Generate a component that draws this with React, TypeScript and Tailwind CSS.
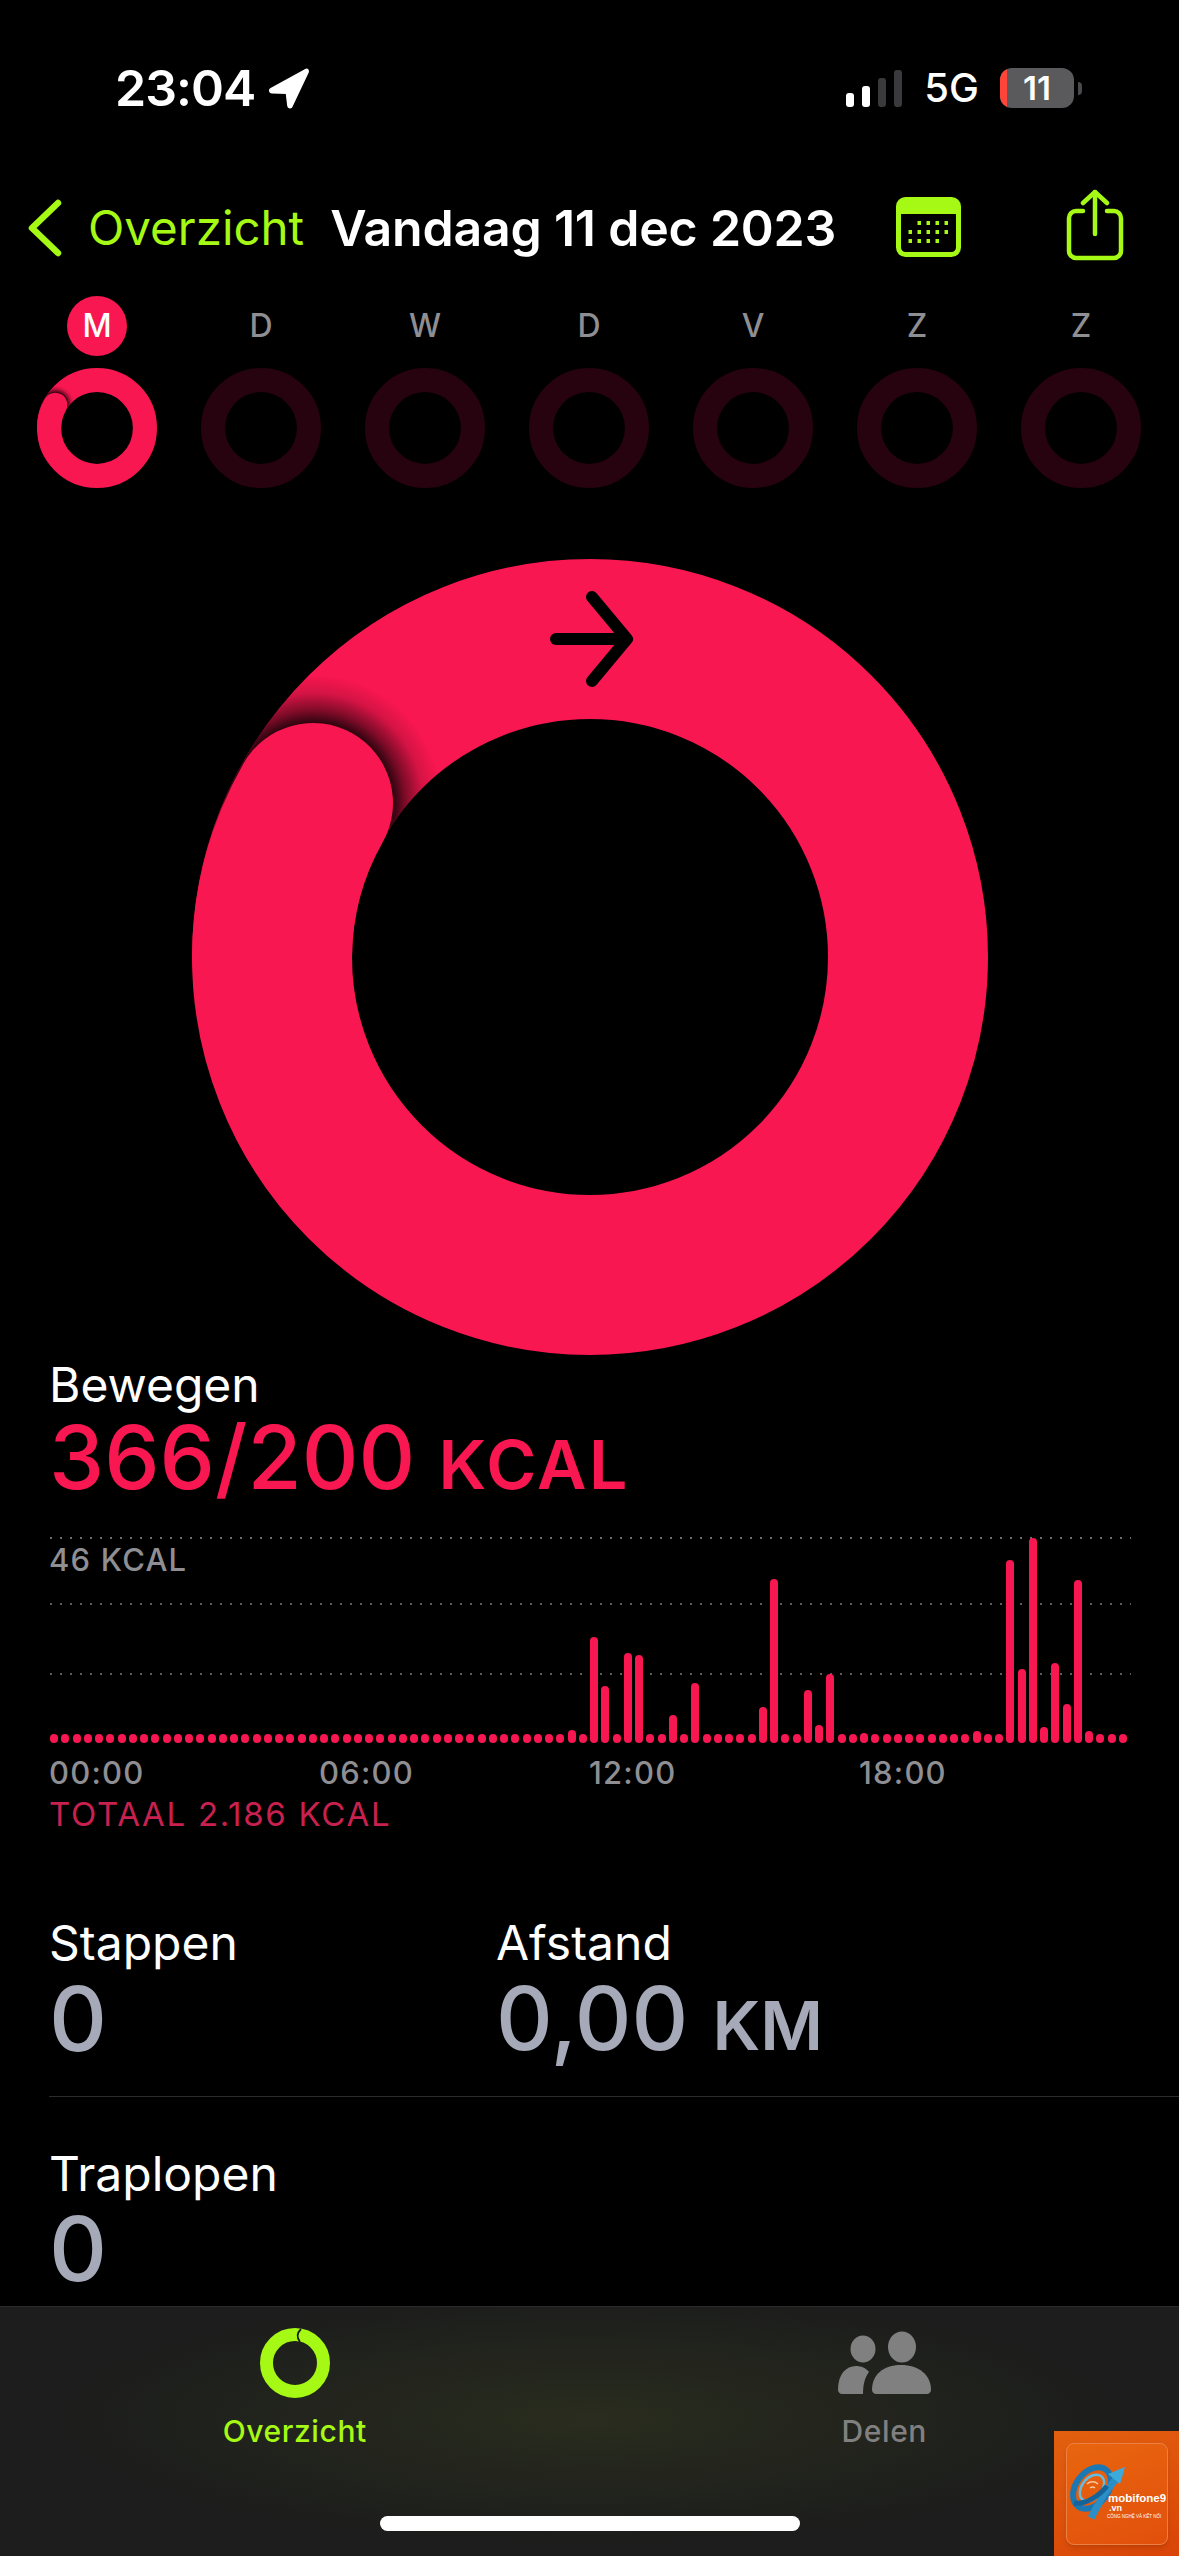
import React from "react";

const PINK = "#f81750";

// kwartierwaarden, 9 = alleen een stip
const spikes: Record<number, number> = {
  46: 13, 48: 106, 49: 57, 51: 90, 52: 88, 55: 28, 57: 60, 63: 36, 64: 164, 67: 53, 68: 18, 69: 69,
  72: 10, 82: 12, 85: 183, 86: 74, 87: 205, 88: 16, 89: 80, 90: 39, 91: 163, 92: 12,
};
const bars = Array.from({ length: 96 }, (_, i) => spikes[i] ?? 9);

const days = ["D", "W", "D", "V", "Z", "Z"];
const times = ["00:00", "06:00", "12:00", "18:00"];

function Ring({ size, done, id }: { size: number; done?: boolean; id: string }) {
  if (!done) {
    return (
      <svg width={size} height={size} viewBox="0 0 796 796">
        <circle cx="398" cy="398" r="318" fill="none" stroke="#26030e" strokeWidth="160" />
      </svg>
    );
  }
  return (
    <svg width={size} height={size} viewBox="0 0 796 796">
      <defs>
        <radialGradient id={id + "-shadow"} gradientUnits="userSpaceOnUse" cx="121" cy="244" r="128">
          <stop offset="0.6" stopColor="#000" stopOpacity="0.9" />
          <stop offset="0.72" stopColor="#000" stopOpacity="0.5" />
          <stop offset="0.86" stopColor="#000" stopOpacity="0.14" />
          <stop offset="1" stopColor="#000" stopOpacity="0" />
        </radialGradient>
        <mask id={id + "-mask"}>
          <circle cx="398" cy="398" r="318" fill="none" stroke="#fff" strokeWidth="160" />
        </mask>
      </defs>
      <circle cx="398" cy="398" r="318" fill="none" stroke={PINK} strokeWidth="160" />
      <circle cx="121" cy="244" r="128" fill={`url(#${id}-shadow)`} mask={`url(#${id}-mask)`} />
      <path d="M121 244 A318 318 0 0 0 80 398" fill="none" stroke={PINK} strokeWidth="160" strokeLinecap="round" />
    </svg>
  );
}

function CalendarIcon() {
  return (
    <svg width="65" height="60" viewBox="0 0 65 60">
      <rect x="2.5" y="2.5" width="60" height="55" rx="7" fill="none" stroke="#a5f914" strokeWidth="5" />
      <path d="M2 9a7 7 0 0 1 7-7h47a7 7 0 0 1 7 7v8H2z" fill="#a5f914" />
      <g fill="#a5f914">
        {[26, 35, 44].map((y) =>
          [14, 23, 32, 41, 50].map((x) =>
            (y === 26 && x === 14) || (y === 44 && x === 50) ? null : <rect key={x + "-" + y} x={x - 1.5} y={y - 2} width="3.5" height="4" />
          )
        )}
      </g>
    </svg>
  );
}

function ShareIcon() {
  return (
    <svg width="58" height="72" viewBox="0 0 58 72" fill="none" stroke="#a5f914" strokeWidth="4.5" strokeLinecap="round" strokeLinejoin="round">
      <path d="M17 22H10a7 7 0 0 0-7 7v33a7 7 0 0 0 7 7h38a7 7 0 0 0 7-7V29a7 7 0 0 0-7-7H41" />
      <path d="M29 45V3" />
      <path d="M17 14 29 3l12 11" />
    </svg>
  );
}

function MobifoneBadge() {
  return (
    <div className="absolute right-0 bottom-0 w-[125px] h-[125px] bg-[linear-gradient(160deg,#e2600f,#d94508)] text-white">
      <div className="absolute left-[12px] top-[12px] w-[102px] h-[102px] rounded-lg bg-[linear-gradient(160deg,#e8650f,#e2500c)] border border-[#ec8044] shadow-md" />
      <svg className="absolute left-0 top-0" width="125" height="125" viewBox="0 0 125 125" fill="none">
        <ellipse cx="38" cy="57" rx="23" ry="16" transform="rotate(-52 38 57)" stroke="#1b78b3" strokeWidth="6" />
        <ellipse cx="38" cy="57" rx="15" ry="10" transform="rotate(-52 38 57)" stroke="#62bde0" strokeWidth="2.500" />
        <path d="M33 53a8 8 0 0 1 11 0M36 57a4 4 0 0 1 5 0" stroke="#f4c9a0" strokeWidth="1.500" />
        <path d="M37 87 50 63 66 43" stroke="#2a8fc7" strokeWidth="7" />
        <path d="M20 72C32 74 46 64 53 55" stroke="#14639a" strokeWidth="5" />
        <path d="M71 36 54 43 66 53z" fill="#3cabdc" />
      </svg>
      <div className="absolute left-[54px] top-[62px] font-['Liberation_Sans',sans-serif] font-bold text-[11.500px] leading-none">mobifone9</div>
      <div className="absolute left-[55px] top-[73px] font-['Liberation_Sans',sans-serif] font-bold text-[9px] leading-none">.vn</div>
      <div className="absolute left-[53px] top-[84px] font-['Liberation_Sans',sans-serif] text-[4.500px] leading-none whitespace-nowrap">CÔNG NGHỆ VÀ KẾT NỐI</div>
    </div>
  );
}

export default function App() {
  return (
    <div className="relative w-[1179px] h-[2556px] overflow-hidden bg-black flex flex-col font-[Inter,sans-serif] text-white">
      <div className="flex-1 min-h-0">
        {/* statusbalk */}
        <div className="h-[176px] flex items-center pl-[115px] pr-[97px]">
          <span className="text-[50px] leading-none font-semibold tracking-[-1px]">23:04</span>
          <svg className="ml-[12px]" width="42" height="42" viewBox="0 0 40 40">
            <path d="M37 3 4 21c-1.500.8-1 3 .7 3l14.300.5 1.500 12.500c.2 1.700 2.300 1.800 2.800.2L38.500 5c.5-1.500-.1-2.700-1.500-2z" fill="#fff" stroke="#fff" strokeWidth="2.500" strokeLinejoin="round" />
          </svg>
          <div className="ml-auto flex items-end gap-[8px] h-[37px]">
            <div className="w-[8px] h-[14px] rounded-[3px] bg-white" />
            <div className="w-[8px] h-[21px] rounded-[3px] bg-white" />
            <div className="w-[8px] h-[29px] rounded-[3px] bg-[#3a3a3c]" />
            <div className="w-[8px] h-[37px] rounded-[3px] bg-[#3a3a3c]" />
          </div>
          <span className="ml-[22px] text-[40px] leading-none font-medium">5G</span>
          <div className="ml-[21px] w-[74px] h-[40px] rounded-[12px] bg-[#5a5a5c] overflow-hidden flex items-center">
            <div className="w-[7px] h-full bg-[#ff453a]" />
            <span className="flex-1 text-center pr-[7px] text-[33px] leading-none font-semibold">11</span>
          </div>
          <div className="ml-[4px] w-[4px] h-[13px] rounded-r-full bg-[#4a4a4c]" />
        </div>

        {/* navigatie */}
        <div className="h-[104px] flex items-center">
          <svg className="ml-[28px]" width="34" height="58" viewBox="0 0 34 58" fill="none" stroke="#a5f914" strokeWidth="6.500" strokeLinecap="round" strokeLinejoin="round">
            <path d="M30 4 4 29l26 25" />
          </svg>
          <span className="ml-[26px] text-[#a5f914] text-[47.500px] leading-none">Overzicht</span>
          <span className="ml-[26px] text-[50px] leading-none font-semibold tracking-[-0.2px] whitespace-nowrap">Vandaag 11 dec 2023</span>
          <div className="ml-[60px] mt-[-2px]"><CalendarIcon /></div>
          <div className="ml-[105px] mt-[-6px]"><ShareIcon /></div>
        </div>

        {/* weekrij */}
        <div className="mt-[16px] pl-[15px] flex">
          <div className="w-[164px] flex flex-col items-center">
            <div className="w-[60px] h-[60px] rounded-full bg-[#f81750] flex items-center justify-center text-[32px] leading-none font-medium">M</div>
            <div className="mt-[12px]"><Ring size={120} done id="small" /></div>
          </div>
          {days.map((d, i) => (
            <div key={i} className="w-[164px] flex flex-col items-center">
              <div className="h-[60px] flex items-center text-[32px] leading-none font-medium text-[#8e8e93]">{d}</div>
              <div className="mt-[12px]"><Ring size={120} /></div>
            </div>
          ))}
        </div>

        {/* grote ring */}
        <div className="mt-[71px] flex justify-center">
          <div className="relative w-[796px] h-[796px]">
            <Ring size={796} done id="big" />
            <svg className="absolute left-[356px] top-[30px]" width="88" height="100" viewBox="0 0 88 100" fill="none" stroke="#000" strokeWidth="12" strokeLinecap="round" strokeLinejoin="round">
              <path d="M8 50h70" />
              <path d="M44 8l35 42-35 42" />
            </svg>
          </div>
        </div>

        {/* bewegen */}
        <div className="mt-[6px] pl-[49px]">
          <div className="text-[48px] leading-none">Bewegen</div>
          <div className="mt-[4px] flex items-baseline text-[#f81750] leading-none">
            <span className="text-[88px] font-medium">366/200</span>
            <span className="ml-[23px] text-[68px] font-semibold tracking-[2.500px]">KCAL</span>
          </div>
        </div>

        {/* grafiek */}
        <div className="relative mt-[28px] ml-[50px] w-[1078px] h-[214px] flex items-end justify-between">
          <div className="absolute left-0 right-[-3px] top-[8px] h-[2px] bg-[repeating-linear-gradient(90deg,#6e6e6e_0_2px,transparent_2px_10px)]" />
          <div className="absolute left-0 right-[-3px] top-[74px] h-[2px] bg-[repeating-linear-gradient(90deg,#5c5c5c_0_2px,transparent_2px_10px)]" />
          <div className="absolute left-0 right-[-3px] top-[144px] h-[2px] bg-[repeating-linear-gradient(90deg,#5c5c5c_0_2px,transparent_2px_10px)]" />
          <div className="absolute left-[-1px] top-[15px] text-[31px] leading-none font-medium tracking-[1.200px] text-[#8e8e93]">46 KCAL</div>
          {bars.map((h, i) => (
            <div key={i} className="relative w-[8px] rounded-full bg-[#f81750]" style={{ height: h }} />
          ))}
        </div>
        <div className="mt-[14px] pl-[49px] flex text-[31px] leading-none font-medium tracking-[1.200px] text-[#8e8e93]">
          {times.map((t) => (
            <div key={t} className="w-[270px]">{t}</div>
          ))}
        </div>
        <div className="mt-[10px] pl-[49px] text-[33px] leading-none tracking-[1.700px] text-[#c9214f]">TOTAAL 2.186 KCAL</div>

        {/* stappen en afstand */}
        <div className="mt-[88px] pl-[49px] flex">
          <div className="w-[447px]">
            <div className="text-[48px] leading-none">Stappen</div>
            <div className="mt-[7px] text-[90px] leading-none font-medium text-[#a5a9b8]">0</div>
          </div>
          <div>
            <div className="text-[48px] leading-none">Afstand</div>
            <div className="mt-[7px] flex items-baseline leading-none text-[#a5a9b8]">
              <span className="text-[88px] font-medium">0,00</span>
              <span className="ml-[24px] text-[68px] font-semibold">KM</span>
            </div>
          </div>
        </div>
        <div className="mt-[32px] ml-[49px] h-px bg-[#2c2c2e]" />
        <div className="mt-[53px] pl-[49px]">
          <div className="text-[48px] leading-none">Traplopen</div>
          <div className="mt-[6px] text-[90px] leading-none font-medium text-[#a5a9b8]">0</div>
        </div>
      </div>

      {/* tabbalk */}
      <div className="relative h-[250px] shrink-0 border-t border-[#2b2b2b] bg-[radial-gradient(ellipse_at_50%_45%,#292c1e_0%,#1c1d1c_65%)] pt-[21px]">
        <div className="grid grid-cols-2">
          <div className="flex flex-col items-center">
            <svg width="70" height="70" viewBox="0 0 70 70">
              <circle cx="35" cy="35" r="28.500" fill="none" stroke="#a5f914" strokeWidth="13" />
              <path d="M41 1c-4 4-4 9-1 13" fill="none" stroke="#1c1d1c" strokeWidth="1.800" />
            </svg>
            <div className="mt-[18px] text-[30px] leading-none font-medium tracking-[0.6px] text-[#a5f914]">Overzicht</div>
          </div>
          <div className="flex flex-col items-center">
            <svg width="93" height="70" viewBox="0 0 93 70" fill="#808080">
              <ellipse cx="25" cy="21" rx="12.500" ry="13.500" />
              <ellipse cx="64" cy="19" rx="14" ry="15.500" />
              <path d="M0 62C0 46 8 38 18 38c5 0 10 2 13 6-4 5-6 12-6 22H4c-2 0-4-2-4-4z" />
              <path d="M34 62c0-15 11-25 29-25s30 10 30 25c0 2-2 4-4 4H38c-2 0-4-2-4-4z" />
            </svg>
            <div className="mt-[18px] text-[30px] leading-none font-medium tracking-[0.6px] text-[#808080]">Delen</div>
          </div>
        </div>
        <div className="mt-[70px] mx-auto w-[420px] h-[15px] rounded-full bg-white" />
        <MobifoneBadge />
      </div>
    </div>
  );
}
